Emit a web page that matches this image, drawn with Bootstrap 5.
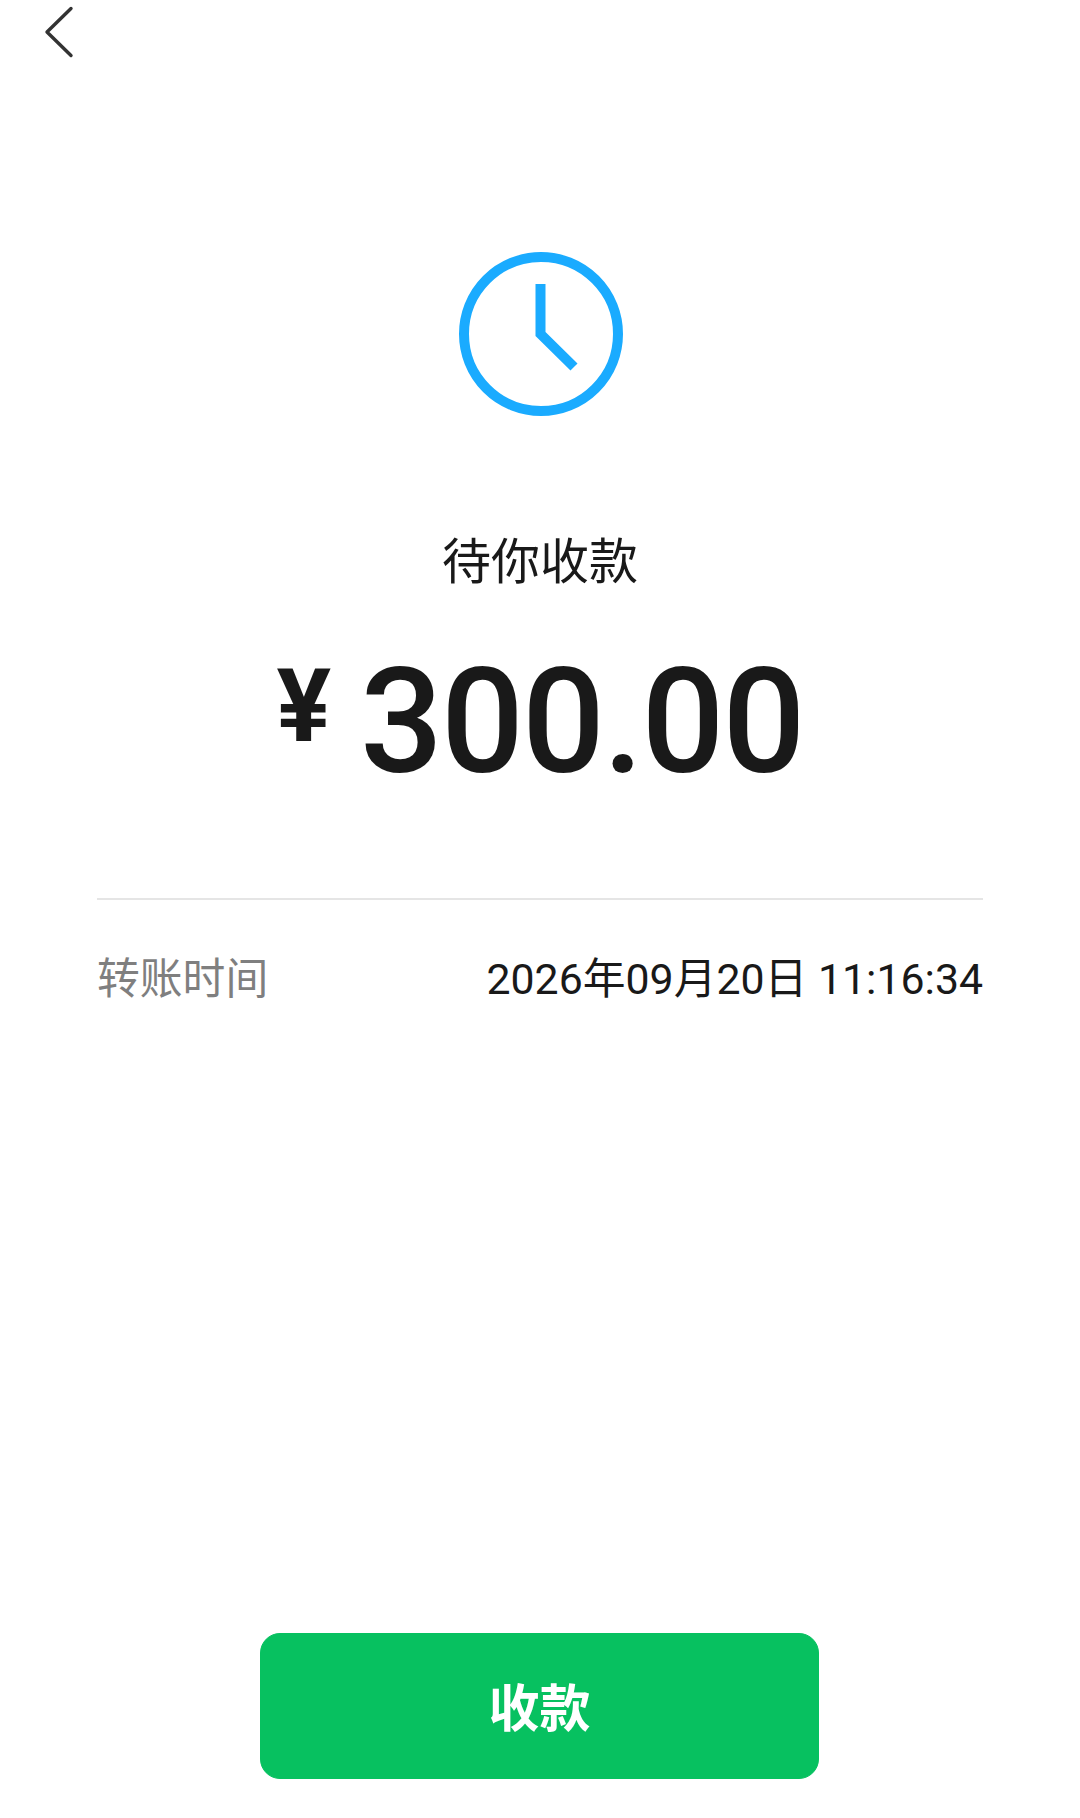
<!DOCTYPE html>
<html lang="zh-CN">
<head>
<meta charset="utf-8">
<title>待你收款</title>
<link rel="stylesheet" href="https://cdn.jsdelivr.net/npm/bootstrap@5.3.0/dist/css/bootstrap.min.css">
<style>
html,body{background:#fff;}
body{font-family:Roboto,"Noto Sans CJK SC",sans-serif;color:#191919;}
.screen{height:1818px;}
.back-link{display:block;width:34px;height:54px;margin:5px 0 0 42px;}
.clock-icon{display:block;margin:193px 0 0 2px;}
.status-title{font-size:49px;line-height:60px;margin-top:117px;}
.amount-line{font-weight:500;line-height:150px;margin-top:55px;color:#191919;}
.amount-cur{font-size:102px;font-weight:700;line-height:102px;margin:7px 29px 0 0;}
.amount-num{font-size:146px;letter-spacing:-2px;}
.detail-block{margin:0 97px 0 97px;}
.detail-rule{border-top:2px solid #e5e5e5;margin-top:100px;padding-top:51px;}
.detail-row{font-size:42.800px;line-height:56px;}
.detail-key{color:#7f7f7f;}
.collect-btn{width:559px;height:146px;border-radius:20px;font-size:51px;font-weight:700;line-height:1;padding-top:13px;background:#07c160;border-color:#07c160;color:#fff;margin:0 1px 39px 0;}
</style>
</head>
<body>
<div class="screen d-flex flex-column">
  <a class="back-link" href="#" aria-label="返回">
    <svg width="34" height="54" viewBox="0 0 34 54" fill="none"><path d="M29 3.500 5 27 29 50.500" stroke="#333" stroke-width="3.400" stroke-linecap="round" stroke-linejoin="round"/></svg>
  </a>
  <div class="d-flex flex-column align-items-center">
    <svg class="clock-icon" width="164" height="164" viewBox="0 0 164 164" fill="none">
      <circle cx="82" cy="82" r="77" stroke="#1aabff" stroke-width="10"/>
      <path d="M81.500 32V82L115 115" stroke="#1aabff" stroke-width="10"/>
    </svg>
    <div class="status-title">待你收款</div>
    <div class="amount-line d-flex align-items-start text-nowrap">
      <span class="amount-cur">¥</span><span class="amount-num">300.00</span>
    </div>
  </div>
  <div class="detail-block detail-rule">
    <div class="detail-row d-flex justify-content-between">
      <span class="detail-key">转账时间</span>
      <span>2026年09月20日 11:16:34</span>
    </div>
  </div>
  <div class="mt-auto d-flex justify-content-center">
    <button type="button" class="btn collect-btn">收款</button>
  </div>
</div>
<script src="https://cdn.jsdelivr.net/npm/bootstrap@5.3.0/dist/js/bootstrap.bundle.min.js"></script>
</body>
</html>
